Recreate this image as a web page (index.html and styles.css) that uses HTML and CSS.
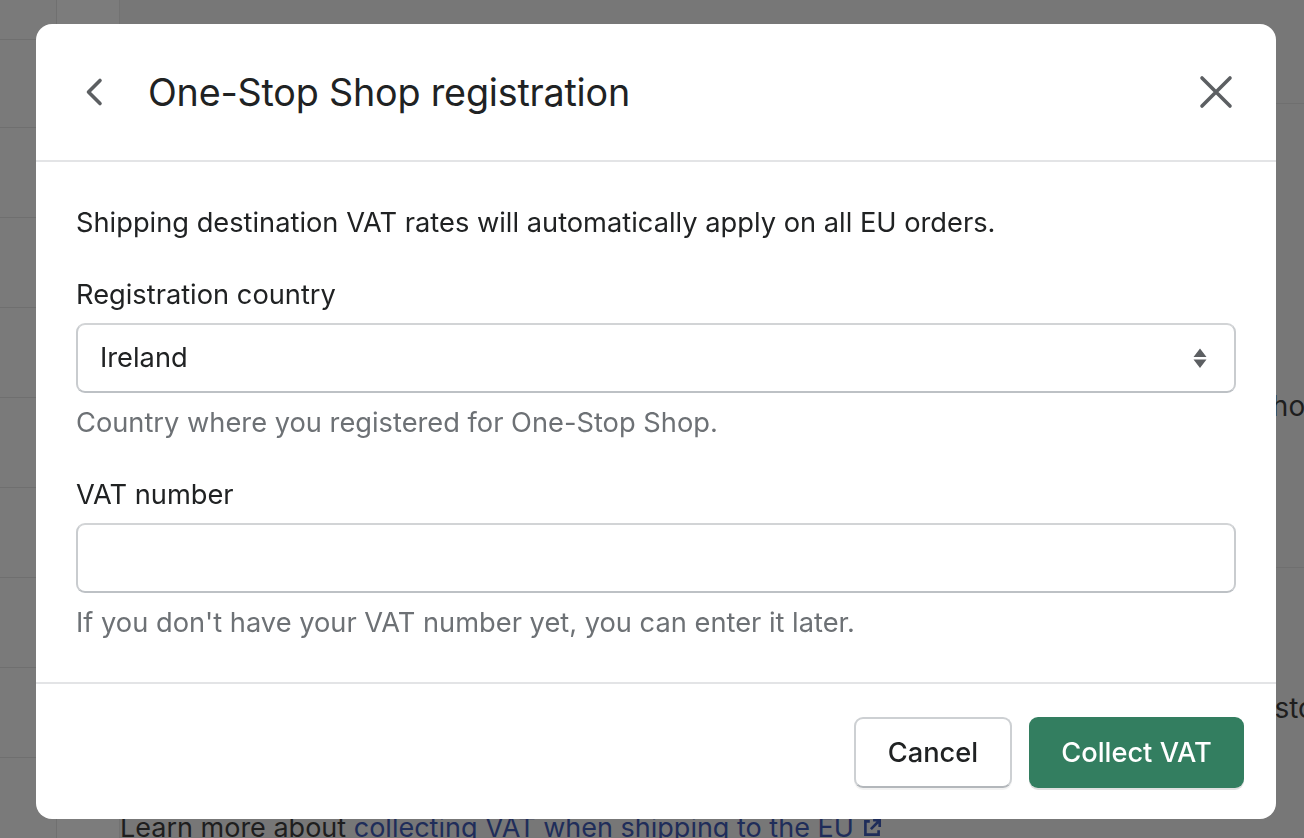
FILE: index.html
```html
<!DOCTYPE html>
<html lang="en">
<head>
<meta charset="utf-8">
<title>One-Stop Shop registration</title>
<link rel="stylesheet" href="styles.css">
</head>
<body>
<div class="page">
  <aside class="rail"></aside>
  <div class="rail2"></div>
  <main class="main">
    <div class="sec sec-top"></div>
    <div class="sec sec-mid"><span class="frag frag-1">Shipping rules for anchor</span></div>
    <div class="sec sec-low">
      <span class="frag frag-2">Show taxes on your store</span>
      <p class="learn">Learn more about <a href="#">collecting VAT when shipping to the EU</a>
        <svg class="ext" viewBox="0 0 20 20" width="22" height="22"><path d="M11 3h6v6M17 3l-8 8M8 4H4v12h12v-4" fill="none" stroke="currentColor" stroke-width="2.4"/></svg>
      </p>
    </div>
  </main>
</div>

<div class="overlay">
  <section class="modal" role="dialog" aria-labelledby="modal-title">
    <header class="modal-header">
      <button class="icon-btn back" aria-label="Back">
        <svg viewBox="0 0 40 40" width="40" height="40"><path d="M24 8.5 12.5 20 24 31.5" fill="none" stroke="#5c5f62" stroke-width="3.6" stroke-linecap="round" stroke-linejoin="round"/></svg>
      </button>
      <h2 id="modal-title" class="modal-title">One-Stop Shop registration</h2>
      <button class="icon-btn close" aria-label="Close">
        <svg viewBox="0 0 40 40" width="40" height="40"><path d="M6 6l28 28M34 6 6 34" fill="none" stroke="#5c5f62" stroke-width="3.6" stroke-linecap="round"/></svg>
      </button>
    </header>
    <div class="modal-body">
      <p class="intro">Shipping destination VAT rates will automatically apply on all EU orders.</p>
      <div class="field">
        <label class="label" for="country">Registration country</label>
        <div class="select">
          <span class="select-value">Ireland</span>
          <svg class="select-arrows" viewBox="0 0 14 20" width="14" height="20"><path d="M7 0.5 13.5 9H0.5z M0.5 11.5h13L7 20z" fill="#5c5f62"/></svg>
        </div>
        <p class="help">Country where you registered for One-Stop Shop.</p>
      </div>
      <div class="field">
        <label class="label" for="vat">VAT number</label>
        <div class="input" id="vat"></div>
        <p class="help">If you don't have your VAT number yet, you can enter it later.</p>
      </div>
    </div>
    <footer class="modal-footer">
      <button class="btn btn-secondary">Cancel</button>
      <button class="btn btn-primary">Collect VAT</button>
    </footer>
  </section>
</div>
</body>
</html>
```

FILE: styles.css
```css
* { box-sizing: border-box; }

html, body {
  margin: 0;
  padding: 0;
  height: 100%;
}

body {
  background: #7a7a7a;
  font-family: Inter, "Noto Sans", "Liberation Sans", sans-serif;
  color: #202223;
  overflow: hidden;
}

/* ---------- background page (dimmed) ---------- */
.page {
  display: flex;
  height: 838px;
}

.rail {
  width: 57px;
  flex: none;
  border-right: 1px solid #707070;
  background:
    linear-gradient(#6f6f6f, #6f6f6f) 0 39px / 100% 1px no-repeat,
    linear-gradient(#6f6f6f, #6f6f6f) 0 127px / 100% 1px no-repeat,
    repeating-linear-gradient(to bottom, transparent 0, transparent 89px, #6f6f6f 89px, #6f6f6f 90px) 0 128px / 100% 100% no-repeat;
}

.rail2 {
  width: 63px;
  flex: none;
  border-right: 1px solid #727272;
  background: #7c7c7c;
}

.main {
  flex: 1;
  display: flex;
  flex-direction: column;
  min-width: 0;
  background: #777;
}

.sec-top {
  height: 104px;
  flex: none;
  border-bottom: 1px solid #6f6f6f;
}

.sec-mid {
  height: 464px;
  flex: none;
  border-bottom: 1px solid #6f6f6f;
  padding-top: 282px;
}

.sec-low {
  flex: none;
  padding-top: 120px;
}

.frag {
  display: block;
  white-space: nowrap;
  font-size: 28px;
  line-height: 40px;
  color: #1e1e1e;
}

.frag-1 { margin-left: 862px; }
.frag-2 { margin-left: 886px; }

.learn {
  margin: 80px 0 0 0;
  font-size: 27px;
  line-height: 40px;
  color: #1e1e1e;
  white-space: nowrap;
}

.learn a {
  color: #1f2d5a;
  text-decoration: none;
}

.ext { color: #1f2d5a; vertical-align: -2px; }

/* ---------- modal ---------- */
.overlay {
  position: fixed;
  inset: 0;
  padding: 24px 0 0 36px;
}

.modal {
  width: 1240px;
  background: #fff;
  border-radius: 16px;
  overflow: hidden;
  display: flex;
  flex-direction: column;
}

.modal-header {
  height: 138px;
  display: flex;
  align-items: center;
  padding: 0 40px;
  border-bottom: 2px solid #e3e4e6;
}

.icon-btn {
  width: 40px;
  height: 40px;
  padding: 0;
  border: 0;
  background: none;
  display: flex;
  align-items: center;
  justify-content: center;
  flex: none;
}

.back { margin-right: 32px; }

.modal-title {
  flex: 1;
  margin: 0;
  font-size: 37.7px;
  line-height: 48px;
  font-weight: 400;
  color: #202223;
  letter-spacing: -0.2px;
}

.modal-body {
  padding: 41px 40px 39px;
  border-bottom: 2px solid #e3e4e6;
}

.intro {
  margin: 0 0 32px;
  font-size: 27.25px;
  line-height: 40px;
}

.field + .field { margin-top: 32px; }

.label {
  display: block;
  font-size: 27.25px;
  line-height: 40px;
  margin-bottom: 8px;
}

.select, .input {
  height: 70px;
  border: 2px solid #c9cccf;
  border-top-color: #d2d4d6;
  border-bottom-color: #bdc1c5;
  border-radius: 9px;
  background: #fff;
}

.select {
  display: flex;
  align-items: center;
  justify-content: space-between;
  padding: 0 27px 0 22px;
}

.select-value {
  font-size: 27.25px;
  line-height: 40px;
}

.select-arrows { flex: none; }

.help {
  margin: 10px 0 0;
  font-size: 27.25px;
  line-height: 40px;
  color: #6d7175;
}

.modal-footer {
  display: flex;
  justify-content: flex-end;
  gap: 17px;
  padding: 33px 32px 31px;
}

.btn {
  height: 71px;
  border-radius: 9px;
  font-family: inherit;
  font-size: 27.25px;
  line-height: 40px;
  font-weight: 500;
  padding: 0 30px;
}

.btn-secondary {
  width: 158px;
  background: #fff;
  color: #202223;
  border: 2px solid #cdd0d3;
  border-bottom-color: #b3b7bb;
  box-shadow: 0 2px 0 rgba(0, 0, 0, 0.05);
}

.btn-primary {
  width: 215px;
  background: #337e60;
  color: #fff;
  border: 0;
  box-shadow: 0 2px 0 rgba(0, 0, 0, 0.12);
}
```
